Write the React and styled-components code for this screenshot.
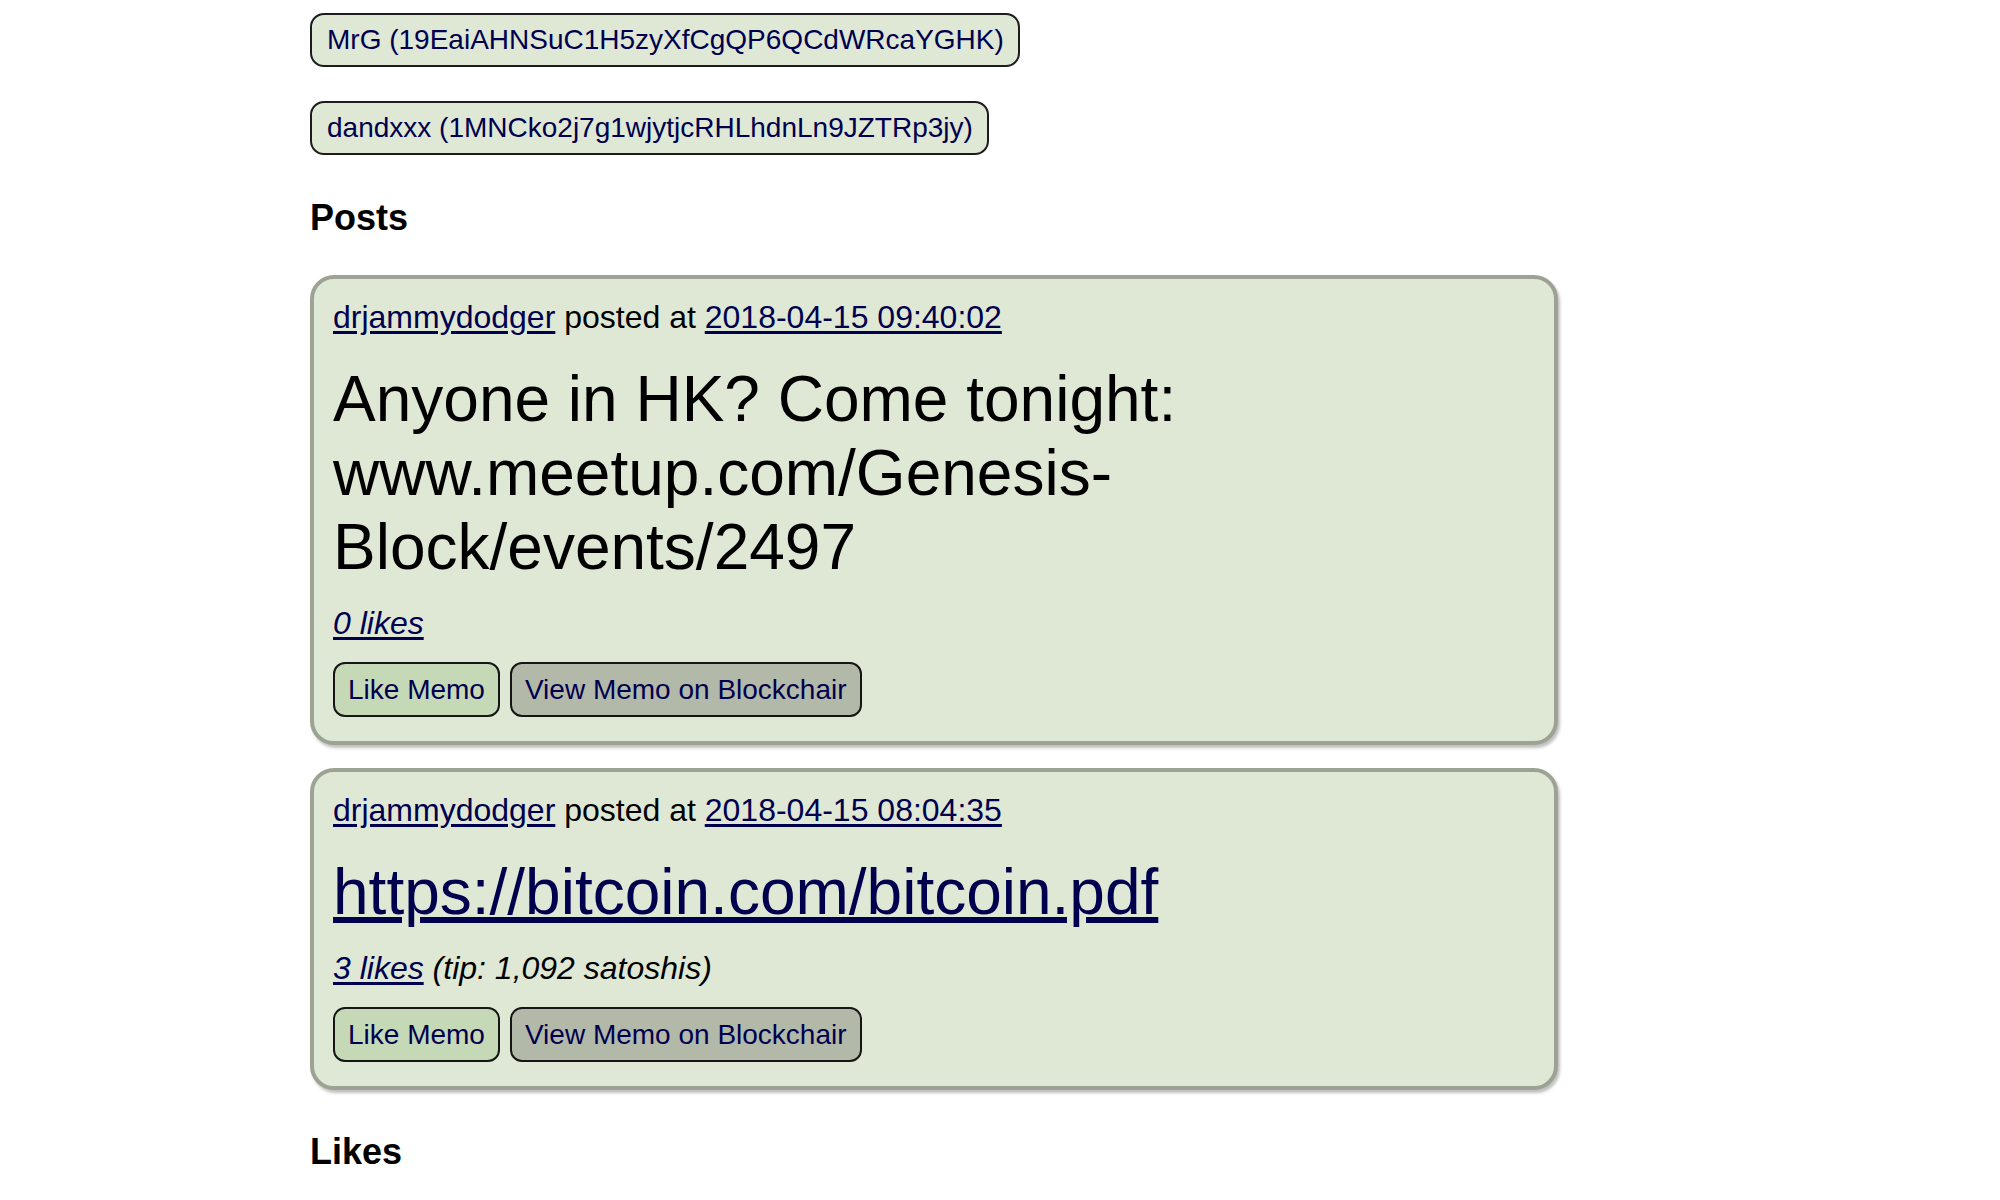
import styled, { createGlobalStyle } from "styled-components";

const GlobalStyle = createGlobalStyle`
  html, body {
    margin: 0;
    padding: 0;
    background: #fff;
  }
  body {
    font-family: "Liberation Sans", Arial, Helvetica, sans-serif;
    color: #000;
  }
`;

const Page = styled.main`
  padding: 13px 0 40px 310px;
  display: flex;
  flex-direction: column;
  align-items: flex-start;
`;

const Pill = styled.a`
  display: inline-block;
  font-size: 28px;
  line-height: 32px;
  color: #00004f;
  text-decoration: none;
  background: #dfe8d5;
  border: 2px solid #1c1c1c;
  border-radius: 14px;
  padding: 9px 14px 9px 15px;
  margin-bottom: 34px;
`;

const Heading = styled.h2`
  font-size: 36px;
  font-weight: bold;
  line-height: 42px;
  margin: ${(p) => p.$margin};
`;

const Card = styled.article`
  box-sizing: border-box;
  width: 1248px;
  background: #dfe8d5;
  border: 4px solid #9ca394;
  border-radius: 24px;
  box-shadow: 2px 3px 3px rgba(0, 0, 0, 0.25);
  padding: 20px 20px 24px 19px;
  margin-bottom: 23px;
`;

const Meta = styled.div`
  font-size: 32px;
  line-height: 37px;
`;

const Link = styled.a`
  color: #00004f;
  text-decoration: underline;
  text-underline-offset: 3px;
`;

const Body = styled.div`
  font-size: 64px;
  line-height: 74px;
  margin: 26px 0 21px;
  max-width: 900px;
  word-wrap: break-word;
`;

const Likes = styled.div`
  font-size: 32px;
  line-height: 37px;
  font-style: italic;
  margin-bottom: 20px;
`;

const Actions = styled.div`
  display: flex;
  gap: 10px;
`;

const Button = styled.button`
  font-family: inherit;
  font-size: 28px;
  line-height: 32px;
  color: #00004f;
  background: ${(p) => (p.$alt ? "#b2b9a9" : "#c6d9b6")};
  border: 2px solid #151515;
  border-radius: 12px;
  padding: 10px 13px 9px;
  cursor: pointer;
`;

const followers = [
  "MrG (19EaiAHNSuC1H5zyXfCgQP6QCdWRcaYGHK)",
  "dandxxx (1MNCko2j7g1wjytjcRHLhdnLn9JZTRp3jy)",
];

const posts = [
  {
    user: "drjammydodger",
    date: "2018-04-15 09:40:02",
    text: "Anyone in HK? Come tonight: www.meetup.com/Genesis-Block/events/2497",
    likes: "0 likes",
  },
  {
    user: "drjammydodger",
    date: "2018-04-15 08:04:35",
    link: "https://bitcoin.com/bitcoin.pdf",
    likes: "3 likes",
    tip: "(tip: 1,092 satoshis)",
  },
];

const App = () => {
  return (
    <>
      <GlobalStyle />
      <Page>
        {followers.map((f) => (
          <Pill key={f} href="#">
            {f}
          </Pill>
        ))}
        <Heading $margin="8px 0 36px">Posts</Heading>
        {posts.map((post) => (
          <Card key={post.date}>
            <Meta>
              <Link href="#">{post.user}</Link> posted at{" "}
              <Link href="#">{post.date}</Link>
            </Meta>
            <Body>
              {post.link ? <Link href="#">{post.link}</Link> : post.text}
            </Body>
            <Likes>
              <Link href="#">{post.likes}</Link>
              {post.tip && <> {post.tip}</>}
            </Likes>
            <Actions>
              <Button>Like Memo</Button>
              <Button $alt>View Memo on Blockchair</Button>
            </Actions>
          </Card>
        ))}
        <Heading $margin="18px 0 0">Likes</Heading>
      </Page>
    </>
  );
};

export default App;
